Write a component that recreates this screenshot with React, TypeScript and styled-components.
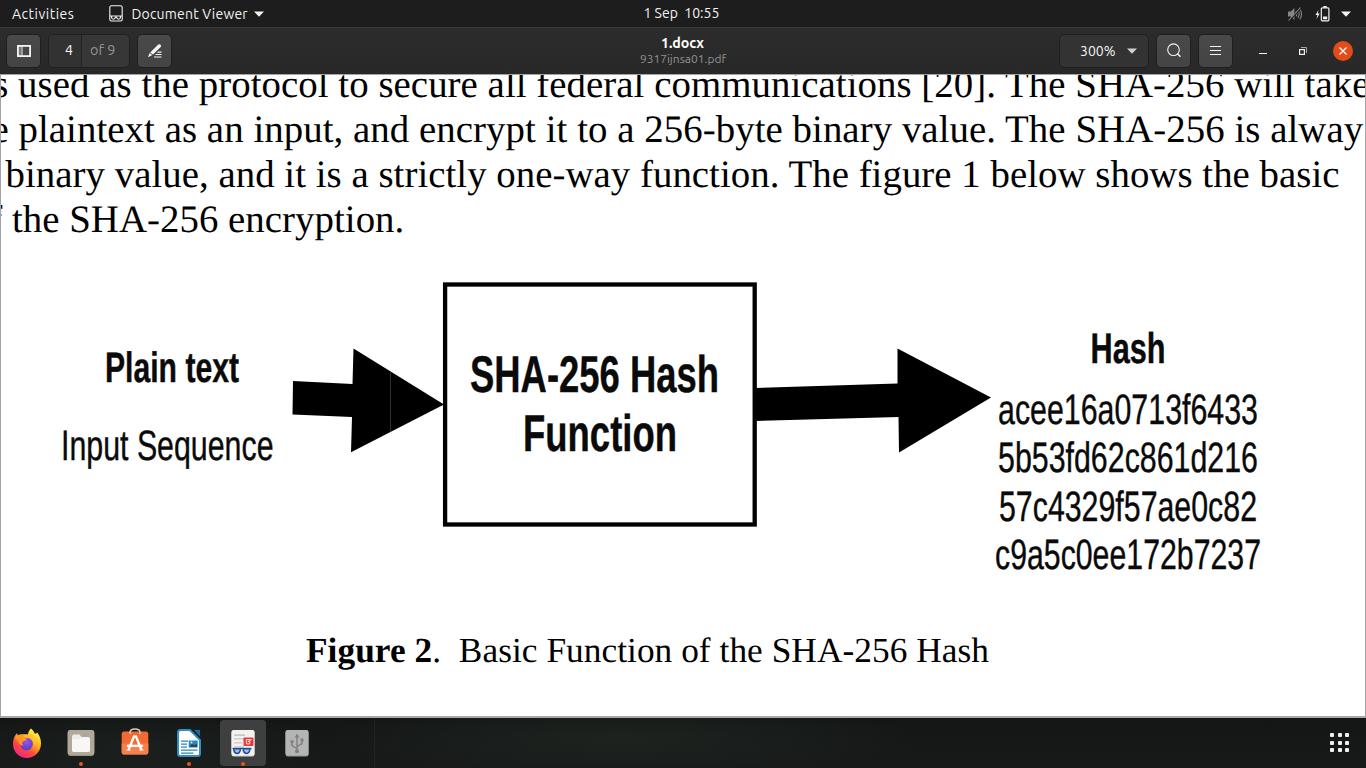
import React from "react";
import styled, { createGlobalStyle } from "styled-components";

const GlobalStyle = createGlobalStyle`
  * { box-sizing: border-box; }
  html, body { margin: 0; padding: 0; background: #161918; }
  svg { display: block; flex: none; }
`;

const Desktop = styled.div`
  width: 1366px;
  height: 768px;
  display: flex;
  flex-direction: column;
  overflow: hidden;
  font-family: "Ubuntu", "Noto Sans", sans-serif;
  font-size: 14px;
  color: #f2f2f2;
`;

/* Shell bar */
const TopBar = styled.div`
  height: 27px;
  flex: none;
  display: grid;
  grid-template-columns: 1fr auto 1fr;
  align-items: center;
  background: #1d1d1d;
`;

const TopGroup = styled.div<{ $end?: boolean }>`
  display: flex;
  align-items: center;
  height: 27px;
  padding: ${(p) => (p.$end ? "0 15px 0 0" : "0 0 0 12px")};
  justify-content: ${(p) => (p.$end ? "flex-end" : "flex-start")};
`;

const Label = styled.span<{ $spacing?: number; $gap?: number; $size?: number }>`
  font-size: ${(p) => p.$size ?? 14}px;
  line-height: 20px;
  letter-spacing: ${(p) => p.$spacing ?? 0}px;
  margin-left: ${(p) => p.$gap ?? 0}px;
  white-space: pre;
`;

const Clock = styled.span`
  font-size: 14px;
  line-height: 20px;
  padding: 0 0 1px;
  white-space: pre;
`;

const IconSlot = styled.span<{ $gap: number }>`
  margin-left: ${(p) => p.$gap}px;
  display: flex;
`;

/* Window header */
const HeaderBar = styled.div`
  height: 47px;
  flex: none;
  display: grid;
  grid-template-columns: 1fr auto 1fr;
  align-items: center;
  padding-bottom: 1px;
  border-top: 1px solid #383838;
  background: linear-gradient(#2c2c2c, #282828);
`;

const HeaderGroup = styled.div<{ $end?: boolean }>`
  display: flex;
  align-items: center;
  gap: 7px;
  padding: ${(p) => (p.$end ? "0 13px 0 0" : "0 0 0 6px")};
  justify-content: ${(p) => (p.$end ? "flex-end" : "flex-start")};
`;

const Button = styled.button`
  width: 35px;
  height: 34px;
  padding: 0;
  display: flex;
  align-items: center;
  justify-content: center;
  border: 1px solid #1f1f1f;
  border-radius: 5px;
  background: linear-gradient(#494949, #444444);
  color: #f4f4f4;
`;

const PageEntry = styled.div`
  width: 82px;
  height: 34px;
  display: flex;
  border: 1px solid #1f1f1f;
  border-radius: 5px;
  background: #373737;
  line-height: 31px;
  overflow: hidden;
`;

const PageNumber = styled.div`
  width: 33px;
  padding-right: 8px;
  text-align: right;
  border-right: 1px solid #222222;
  background: #323232;
  color: #ffffff;
`;

const PageTotal = styled.div`
  padding-left: 8px;
  font-size: 14.4px;
  color: #929292;
`;

const TitleBlock = styled.div`
  display: flex;
  flex-direction: column;
  align-items: center;
  padding-bottom: 1px;
`;

const Title = styled.div`
  font-size: 14.2px;
  font-weight: 700;
  line-height: 16px;
  padding-right: 1px;
  color: #ffffff;
`;

const Subtitle = styled.div`
  font-size: 12px;
  line-height: 15px;
  color: #929292;
`;

const ZoomBox = styled.div`
  width: 90px;
  height: 34px;
  padding: 0 11px 0 20px;
  display: flex;
  align-items: center;
  justify-content: space-between;
  border: 1px solid #1f1f1f;
  border-radius: 5px;
  background: #333333;
`;

const WindowControls = styled.div`
  display: flex;
  align-items: center;
  margin-left: 19px;
`;

const Control = styled.span<{ $width: number }>`
  width: ${(p) => p.$width}px;
  display: flex;
  justify-content: flex-start;
`;

const CloseButton = styled.span`
  width: 20px;
  height: 20px;
  border-radius: 50%;
  display: flex;
  align-items: center;
  justify-content: center;
  background: #e24c1a;
`;

/* Document */
const Page = styled.main`
  height: 644px;
  flex: none;
  display: flex;
  flex-direction: column;
  overflow: hidden;
  background: #ffffff;
  border: 1px solid #a4a4a4;
  border-bottom: 2px solid #a8a8a8;
  color: #000000;
  font-family: "Liberation Serif", "Times New Roman", serif;
  text-rendering: geometricPrecision;
`;

const Paragraph = styled.div`
  margin-top: -13px;
  height: 206px;
  flex: none;
`;

const Line = styled.div<{ $start: number; $spacing: number }>`
  height: 45px;
  line-height: 45px;
  font-size: 38.85px;
  letter-spacing: ${(p) => p.$spacing}px;
  margin-left: ${(p) => p.$start}px;
  white-space: pre;
`;

const Figure = styled.figure`
  margin: 0;
  flex: none;
`;

const Caption = styled.figcaption`
  margin: 69px 0 0 305px;
  font-size: 35.3px;
  line-height: 44px;
  letter-spacing: 0.05px;
  white-space: pre;
`;

const DiagramText = styled.text<{ $bold?: boolean }>`
  font-family: "Liberation Sans", Arial, sans-serif;
  font-weight: ${(p) => (p.$bold ? 700 : 400)};
  fill: #0a0a0a;
  stroke: #0a0a0a;
  stroke-width: 0.4px;
`;

/* Dock */
const Dock = styled.nav`
  height: 50px;
  flex: none;
  display: flex;
  align-items: flex-start;
  padding-top: 2px;
  background:
    linear-gradient(90deg, transparent 374px, rgba(120, 110, 100, 0.12) 374px 375px, transparent 375px),
    radial-gradient(ellipse 300px 40px at 620px 20px, rgba(60, 74, 62, 0.22), transparent),
    radial-gradient(ellipse 200px 40px at 140px 30px, rgba(50, 62, 56, 0.18), transparent),
    linear-gradient(#131615, #171a19);
`;

const DockItem = styled.div<{ $active?: boolean }>`
  width: 46px;
  height: 46px;
  margin: 0 4px;
  flex: none;
  display: flex;
  flex-direction: column;
  align-items: center;
  justify-content: space-between;
  padding-top: 8px;
  border-radius: 4px;
  background: ${(p) => (p.$active ? "#3d403f" : "transparent")};
`;

const RunningDot = styled.i`
  width: 4px;
  height: 4px;
  border-radius: 50%;
  background: #e95420;
`;

const AppsButton = styled.div`
  margin: 13px 17px 0 auto;
  display: grid;
  grid-template-columns: repeat(3, 4px);
  gap: 3.5px;
`;

const AppDot = styled.i`
  width: 4px;
  height: 4px;
  border-radius: 1px;
  background: #f0f0f0;
`;

const DropArrow = ({ color = "#f2f2f2" }: { color?: string }) => (
  <svg width="10" height="6" viewBox="0 0 10 6"><path d="M0 .5h10L5 5.7z" fill={color} /></svg>
);

const ViewerGlyph = () => (
  <svg width="14" height="17" viewBox="0 0 14 17" fill="none" stroke="#f2f2f2" strokeWidth="1.1">
    <rect x=".8" y=".8" width="12.4" height="15.2" rx="1.6" />
    <path d="M1 11h12M2.6 11v1.6q0 1.6 1.8 1.6t1.8-1.6q.8-.9 1.6 0 0 1.6 1.8 1.6t1.8-1.6V11" />
  </svg>
);

const MutedGlyph = () => (
  <svg width="16" height="14" viewBox="0 0 16 14" fill="none" stroke="#858585">
    <path d="M1 4.600h2.800L7.400 1v12L3.800 9.400H1z" fill="#858585" stroke="none" />
    <path d="M9 4.600q1.600 2.400 0 4.800M10.900 3q2.600 4 0 8M12.800 1.500q3.400 5.500 0 11" strokeWidth="1.1" />
    <path d="M2.200 14.200 14.200 1.200" stroke="#1d1d1d" strokeWidth="1.2" />
    <path d="M1.500 13.500 13.500.5" strokeWidth="1.1" />
  </svg>
);

const BatteryGlyph = () => (
  <svg width="15" height="16" viewBox="0 0 15 16">
    <path d="M3.600 4 .4 9h2l-.9 4L4.700 7.600H2.800z" fill="#f2f2f2" />
    <path d="M8.300 0h3.400v1.700H8.300z" fill="#f2f2f2" />
    <rect x="6.300" y="1.800" width="7.600" height="13" rx="1" fill="none" stroke="#f2f2f2" strokeWidth="1.200" />
    <path d="M8 10.500h4.200v2.800H8z" fill="#f2f2f2" />
  </svg>
);

const SidebarGlyph = () => (
  <svg width="14" height="12" viewBox="0 0 14 12">
    <path d="M1 1h3v10H1z" fill="#777" />
    <path d="M5 1v10" stroke="#f4f4f4" />
    <rect x=".9" y=".9" width="12.200" height="10.200" fill="none" stroke="#f4f4f4" strokeWidth="1.800" />
  </svg>
);

const AnnotateGlyph = () => (
  <svg width="16" height="14" viewBox="0 0 16 14" fill="#f4f4f4">
    <path d="M11.300.6q1-.9 1.900 0l.5.5q.8.9 0 1.800L6 10.500 3.200 8.400z" />
    <path d="m2.600 9.100 2.700 2L1 13.300z" />
    <path d="M11 7.600h3.500v1.100H10zM8.500 10h6v1.100h-6zM7 12.400h7.500v1.100H7z" />
  </svg>
);

const SearchGlyph = () => (
  <svg width="14" height="15" viewBox="0 0 14 15" fill="none" stroke="#f4f4f4" strokeWidth="1.100">
    <circle cx="6.500" cy="6.700" r="5.800" />
    <path d="m10.600 10.800 2.800 3" strokeWidth="1.400" />
  </svg>
);

const MenuGlyph = () => (
  <svg width="11" height="9" viewBox="0 0 11 9" fill="#f4f4f4"><path d="M0 0h11v1H0zM0 4h11v1H0zM0 8h11v1H0z" /></svg>
);

const FirefoxIcon = () => (
  <svg width="30" height="32" viewBox="0 0 30 32">
    <defs>
      <linearGradient id="fxBody" x1=".8" y1=".1" x2=".25" y2="1">
        <stop offset="0" stopColor="#fff04a" /><stop offset=".35" stopColor="#ffb020" />
        <stop offset=".65" stopColor="#ff4b3a" /><stop offset="1" stopColor="#f0208c" />
      </linearGradient>
      <radialGradient id="fxCore" cx=".5" cy=".3" r=".7">
        <stop offset="0" stopColor="#a050e8" /><stop offset="1" stopColor="#5540c8" />
      </radialGradient>
    </defs>
    <path d="M19 .5c2 1.500 3 3.400 4 5.300 1.400-.3 2-.8 2-1.500 2.600 3 4 7 4 11.200C29 23.500 22.800 30 15 30S1 24 1 16c0-4.500 1.500-8.300 4-11 .1 1.500.6 2 1.500 2.700C8 6.500 9.500 6 11.500 6.300c2.300-.2 3.200-.2 4.500.2.200-2.500 1.200-4.500 3-6z" fill="url(#fxBody)" />
    <circle cx="14.500" cy="16" r="6.300" fill="url(#fxCore)" />
    <path d="M3 9c2.500-3 6-3 8.500-1.800-.4 1.600.3 2.300 3.500 3.500-.5 1.700-2.500 2-4 3-1.500 1-1 2.800.5 3.500-2 .8-4.500-.5-4.500-3.500C5.500 12 4 10.500 3 9z" fill="#ff9822" />
    <path d="M15.500 8.500c4 0 7.500 3 7 8.500 2-4 .5-8.500-3-11z" fill="#ffc52c" />
  </svg>
);

const FilesIcon = () => (
  <svg width="28" height="30" viewBox="0 0 28 30">
    <rect x=".7" y="2" width="26.600" height="26" rx="3" fill="#9e9684" />
    <rect x=".7" y="2" width="26.600" height="24.800" rx="3" fill="#b0a997" />
    <path d="M5 22V8.500q0-2 2-2h5.500l2 2.500H21q2 0 2 2V22q0 2-2 2H7q-2 0-2-2z" fill="#efede9" />
    <path d="M5 13q0-2 2-2h5l2-1.500h7q2 0 2 2V22q0 2-2 2H7q-2 0-2-2z" fill="#f8f7f5" />
  </svg>
);

const StoreIcon = () => (
  <svg width="28" height="30" viewBox="0 0 28 30">
    <rect x=".7" y="3.500" width="26.600" height="23" rx="2.500" fill="#f06a32" />
    <path d="M.7 15.500h26.600v9q0 2-2 2H2.700q-2 0-2-2z" fill="#f4804d" />
    <path d="M9 6V4.500Q9 .9 14 .9t5 3.600V6" fill="none" stroke="#d9cdb8" strokeWidth="1.500" />
    <path d="M7.500 22 13 8.500h2L20.500 22M6 17.800h16" fill="none" stroke="#fff" strokeWidth="2.300" />
    <path d="M5.500 22h4M18.500 22h4" stroke="#fff" strokeWidth="1.200" />
  </svg>
);

const WriterIcon = () => (
  <svg width="26" height="30" viewBox="0 0 26 30">
    <path d="M2 4.500q0-2.500 2.500-2.500H14l10 10v13.500Q24 28 21.500 28h-17Q2 28 2 25.500z" fill="#fff" stroke="#2f8fc6" strokeWidth="2" />
    <path d="M14.500 1 25 11.500V4q0-3-3-3z" fill="#17201f" />
    <path d="M18 2h6v6.500z" fill="#1c6a9e" />
    <path d="M5 12.500h7v1.300H5zm0 3h6v1.300H5zm0 3h6v1.300H5zm0 3h16.500v1.300H5zm0 3h12.500v1.300H5z" fill="#2b86bb" />
    <rect x="12.700" y="12.500" width="9" height="7" fill="#2189c3" />
    <path d="m13.500 18.700 2.600-3 2 1.500 2.800-1.500v3z" fill="#3c3a34" /><circle cx="15.500" cy="14.600" r="1" fill="#e0edf5" />
  </svg>
);

const EvinceIcon = () => (
  <svg width="26" height="30" viewBox="0 0 26 30">
    <rect x="1.500" y="2" width="23" height="26.500" rx="2.500" fill="#d5d2ce" />
    <rect x="1.500" y="2" width="23" height="25.500" rx="2.500" fill="#f3f2f0" />
    <path d="M4 6.300h11v1.600H4zm0 4h10v1.200H4zm0 4h8v1.200H4zm0 4h10v1.200H4z" fill="#cbc8c0" />
    <rect x="13.500" y="9.500" width="10" height="8.500" rx=".8" fill="#e3383d" />
    <path d="M20.500 11.500h-4.200v4.400h3.500v-2.400h-2l4-2" fill="none" stroke="#fff" strokeWidth=".8" />
    <path d="M2.500 20.500h19" stroke="#1f4d91" strokeWidth="1.400" />
    <path d="M4 20.800h5.500q1 0 .8 1.200-.5 3.500-3 3.500-2.800 0-3.500-3.300zM13.500 20.800H19q1 0 .8 1.200-.6 3.500-3.100 3.500-2.800 0-3.500-3.300z" fill="#9bbce6" stroke="#1f4d91" strokeWidth="1.500" />
  </svg>
);

const UsbIcon = () => (
  <svg width="24" height="30" viewBox="0 0 24 30">
    <rect x=".5" y="2" width="23" height="26.500" rx="2.500" fill="#979797" />
    <rect x=".5" y="2" width="23" height="25.500" rx="2.500" fill="#b4b4b4" />
    <path d="M12 8v15M12 20.500l-5-3V14M12 18.500l5-3V12" stroke="#7e7e7e" fill="none" strokeWidth="1.400" />
    <path d="m12 5.500 2.300 4H9.700z" fill="#7e7e7e" />
    <circle cx="12" cy="23.200" r="2" fill="#7e7e7e" /><circle cx="7" cy="13.500" r="1.600" fill="#7e7e7e" />
    <path d="M15.500 10.500h3v3h-3z" fill="#7e7e7e" />
  </svg>
);

const bodyLines = [
  { start: -7.8, spacing: 0.05, text: "s used as the protocol to secure all federal communications [20]. The SHA-256 will take" },
  { start: -9.6, spacing: 0.06, text: "e plaintext as an input, and encrypt it to a 256-byte binary value. The SHA-256 is alway" },
  { start: -5.2, spacing: 0.035, text: " binary value, and it is a strictly one-way function. The figure 1 below shows the basic" },
  { start: -11.8, spacing: 0.04, text: "f the SHA-256 encryption." },
];

const diagramTexts = [
  { x: 105, y: 382, w: 134, size: 42.5, bold: true, text: "Plain text" },
  { x: 61, y: 460, w: 212.5, size: 42.5, text: "Input Sequence" },
  { x: 470, y: 392.3, w: 249, size: 51.5, bold: true, text: "SHA-256 Hash" },
  { x: 523, y: 450.7, w: 154, size: 51.5, bold: true, text: "Function" },
  { x: 1090.5, y: 362.5, w: 75, size: 43, bold: true, text: "Hash" },
  { x: 998, y: 423.7, w: 260, size: 42.5, text: "acee16a0713f6433" },
  { x: 998, y: 472, w: 260, size: 42.5, text: "5b53fd62c861d216" },
  { x: 999, y: 520.5, w: 258, size: 42.5, text: "57c4329f57ae0c82" },
  { x: 995, y: 569, w: 266, size: 42.5, text: "c9a5c0ee172b7237" },
];

const dockApps = [
  { name: "firefox", icon: <FirefoxIcon /> },
  { name: "files", icon: <FilesIcon />, running: true },
  { name: "store", icon: <StoreIcon /> },
  { name: "writer", icon: <WriterIcon />, running: true },
  { name: "viewer", icon: <EvinceIcon />, running: true, active: true },
  { name: "usb", icon: <UsbIcon /> },
];

export default function App() {
  return (
    <Desktop>
      <GlobalStyle />
      <TopBar>
        <TopGroup>
          <Label $spacing={0.5}>Activities</Label>
          <IconSlot $gap={35}><ViewerGlyph /></IconSlot>
          <Label $gap={8} $spacing={0.2}>Document Viewer</Label>
          <IconSlot $gap={6}><DropArrow /></IconSlot>
        </TopGroup>
        <Clock>1 Sep  10:55 </Clock>
        <TopGroup $end>
          <MutedGlyph />
          <IconSlot $gap={12}><BatteryGlyph /></IconSlot>
          <IconSlot $gap={11}><DropArrow /></IconSlot>
        </TopGroup>
      </TopBar>

      <HeaderBar>
        <HeaderGroup>
          <Button><SidebarGlyph /></Button>
          <PageEntry><PageNumber>4</PageNumber><PageTotal>of 9</PageTotal></PageEntry>
          <Button><AnnotateGlyph /></Button>
        </HeaderGroup>
        <TitleBlock>
          <Title>1.docx</Title>
          <Subtitle>9317ijnsa01.pdf</Subtitle>
        </TitleBlock>
        <HeaderGroup $end>
          <ZoomBox><Label>300%</Label><DropArrow color="#d0d0d0" /></ZoomBox>
          <Button><SearchGlyph /></Button>
          <Button><MenuGlyph /></Button>
          <WindowControls>
            <Control $width={40}>
              <svg width="8" height="8" viewBox="0 0 8 8"><path d="M0 6h8v1H0z" fill="#f2f2f2" /></svg>
            </Control>
            <Control $width={34}>
              <svg width="8" height="8" viewBox="0 0 8 8" fill="none">
                <path d="M2 .5h5.500V6" stroke="#a8a8a8" />
                <rect x=".6" y="2.600" width="4.800" height="4.800" stroke="#f2f2f2" strokeWidth="1.200" />
              </svg>
            </Control>
            <CloseButton>
              <svg width="8" height="8" viewBox="0 0 8 8"><path d="m.5.5 7 7m0-7-7 7" stroke="#fff" strokeWidth="1.300" /></svg>
            </CloseButton>
          </WindowControls>
        </HeaderGroup>
      </HeaderBar>

      <Page>
        <Paragraph>
          {bodyLines.map((l) => <Line key={l.text} $start={l.start} $spacing={l.spacing}>{l.text}</Line>)}
        </Paragraph>
        <Figure>
          <svg width="1364" height="292" viewBox="1 268 1364 292" overflow="visible">
            <rect x="445.100" y="284.500" width="309.600" height="240" fill="none" stroke="#000" strokeWidth="4.300" />
            <path d="M293 381 352.500 384 353.500 348.500 444 404.500 351 452.300 352 417 292.500 414.500z" fill="#000" />
            <path d="M390.500 371.500v60" stroke="#3c3c3c" strokeWidth=".8" />
            <path d="M755 388 897.500 383.500V348.500L991 397.600 899 452.500 898.500 417 755 421z" fill="#000" />
            {diagramTexts.map((t) => (
              <DiagramText key={t.text} x={t.x} y={t.y} fontSize={t.size} textLength={t.w} lengthAdjust="spacingAndGlyphs" $bold={t.bold}>
                {t.text}
              </DiagramText>
            ))}
          </svg>
          <Caption><b>Figure 2</b>.  Basic Function of the SHA-256 Hash</Caption>
        </Figure>
      </Page>

      <Dock>
        {dockApps.map((a) => (
          <DockItem key={a.name} $active={a.active}>
            {a.icon}
            {a.running && <RunningDot />}
          </DockItem>
        ))}
        <AppsButton>
          {Array.from({ length: 9 }, (_, i) => <AppDot key={i} />)}
        </AppsButton>
      </Dock>
    </Desktop>
  );
}
